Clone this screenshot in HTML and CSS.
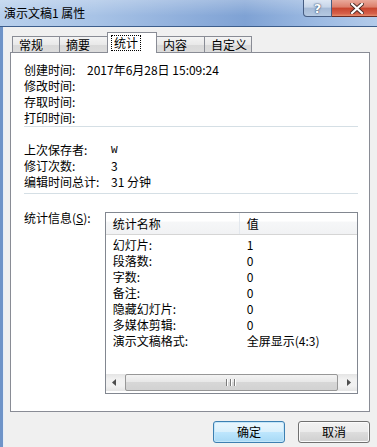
FILE: index.html
```html
<!DOCTYPE html>
<html>
<head>
<meta charset="utf-8">
<link rel="stylesheet" href="styles.css">
</head>
<body>
<div class="win">
  <div class="titlebar">
    <span class="title">演示文稿1 属性</span>
    <div class="caps">
      <div class="cap help">?</div>
      <div class="cap close">
        <svg width="14" height="11" viewBox="0 0 14 11"><path d="M2 1 L12 10 M12 1 L2 10" stroke="#4a2a24" stroke-width="4" stroke-linecap="square"/><path d="M2 1 L12 10 M12 1 L2 10" stroke="#fff" stroke-width="2.2" stroke-linecap="square"/></svg>
      </div>
    </div>
  </div>
  <div class="frame">
    <div class="client">
      <div class="tabs">
        <div class="tab w47">常规</div>
        <div class="tab w48">摘要</div>
        <div class="tab sel"><span class="focus">统计</span></div>
        <div class="tab w47">内容</div>
        <div class="tab w48">自定义</div>
      </div>
      <div class="panel">
        <div class="rows">
          <div class="row"><span class="lbl1">创建时间:</span><span>2017年6月28日 15:09:24</span></div>
          <div class="row"><span class="lbl1">修改时间:</span></div>
          <div class="row"><span class="lbl1">存取时间:</span></div>
          <div class="row"><span class="lbl1">打印时间:</span></div>
        </div>
        <div class="sep s1"></div>
        <div class="rows r2">
          <div class="row"><span class="lbl2">上次保存者:</span><span class="w">W</span></div>
          <div class="row"><span class="lbl2">修订次数:</span><span>3</span></div>
          <div class="row"><span class="lbl2">编辑时间总计:</span><span>31 分钟</span></div>
        </div>
        <div class="sep s2"></div>
        <div class="stats">
          <span class="slbl">统计信息(<u>S</u>):</span>
          <div class="lv">
            <div class="lvhead"><div class="c1">统计名称</div><div class="c2">值</div></div>
            <div class="lvbody">
              <div class="lvrow"><div class="c1">幻灯片:</div><div class="c2">1</div></div>
              <div class="lvrow"><div class="c1">段落数:</div><div class="c2">0</div></div>
              <div class="lvrow"><div class="c1">字数:</div><div class="c2">0</div></div>
              <div class="lvrow"><div class="c1">备注:</div><div class="c2">0</div></div>
              <div class="lvrow"><div class="c1">隐藏幻灯片:</div><div class="c2">0</div></div>
              <div class="lvrow"><div class="c1">多媒体剪辑:</div><div class="c2">0</div></div>
              <div class="lvrow"><div class="c1">演示文稿格式:</div><div class="c2">全屏显示(4:3)</div></div>
            </div>
            <div class="hscroll">
              <div class="arrow"><svg width="4" height="7" viewBox="0 0 4 7"><path d="M4 0 L0 3.5 L4 7Z" fill="#4d4d4d"/></svg></div>
              <div class="thumb"><span class="grip"><i></i><i></i><i></i></span></div>
              <div class="arrow"><svg width="4" height="7" viewBox="0 0 4 7"><path d="M0 0 L4 3.5 L0 7Z" fill="#4d4d4d"/></svg></div>
            </div>
          </div>
        </div>
      </div>
      <div class="buttons">
        <div class="btn def">确定</div>
        <div class="btn">取消</div>
      </div>
    </div>
  </div>
</div>
</body>
</html>
```

FILE: styles.css
```css
html, body {
  margin: 0;
  padding: 0;
}
body {
  width: 377px;
  height: 447px;
  overflow: hidden;
  font-family: "Noto Sans CJK SC", "Noto Sans", sans-serif;
  font-size: 12px;
  color: #000;
  background: #f0f0f0;
}
.win {
  width: 377px;
  height: 447px;
  display: flex;
  flex-direction: column;
}
.titlebar {
  height: 26px;
  flex: none;
  display: flex;
  justify-content: space-between;
  align-items: flex-start;
  border-bottom: 1px solid #3d5e8c;
  background:
    linear-gradient(to bottom, rgba(255,255,255,0.25), rgba(255,255,255,0) 60%),
    linear-gradient(to right, #b7cfec 0%, #a8c3e6 25%, #8eaedb 50%, #7fa2d4 65%, #9dbbe3 85%, #b3cbea 100%);
}
.title {
  padding-left: 4px;
  line-height: 26px;
  font-size: 12px;
  color: #000;
}
.caps {
  display: flex;
  margin-right: -6px;
}
.cap {
  height: 17px;
  box-sizing: border-box;
  display: flex;
  align-items: center;
  justify-content: center;
}
.help {
  width: 29px;
  border: 1px solid #465d82;
  border-top: none;
  border-radius: 0 0 0 4px;
  background: linear-gradient(to bottom, #dde7f3 0%, #c6d5e8 45%, #a5bad6 50%, #b5c9e2 100%);
  color: #fff;
  font-family: "DejaVu Sans", sans-serif;
  font-weight: bold;
  font-size: 13px;
  text-shadow: 0 0 2px #2f4669, 0 0 1px #2f4669;
}
.close {
  width: 51px;
  border: 1px solid #6b2a22;
  border-top: none;
  border-left: none;
  background: linear-gradient(to bottom, #e9a99b 0%, #dc7e6b 45%, #c7442d 50%, #d6604a 85%, #e58f6e 100%);
}
.frame {
  flex: 1;
  display: flex;
  border-left: 3px solid #6f94c8;
}
.client {
  flex: 1;
  border-left: 1px solid #e6eef8;
  padding: 5px 0 0 6px;
  display: flex;
  flex-direction: column;
}
.tabs {
  height: 20px;
  display: flex;
  align-items: flex-end;
  padding-left: 2px;
}
.tab {
  height: 16px;
  box-sizing: border-box;
  border: 1px solid #898c95;
  border-bottom: none;
  border-right: none;
  padding-left: 6px;
  line-height: 15px;
  background: linear-gradient(to bottom, #f4f4f4 0%, #e9e9e9 50%, #d9d9d9 51%, #dcdcdc 100%);
}
.w47 { width: 47px; }
.w48 { width: 48px; }
.tabs .tab:last-child { border-right: 1px solid #898c95; }
.tab.sel {
  width: 50px;
  height: 21px;
  margin-bottom: -1px;
  position: relative;
  z-index: 1;
  background: #fff;
  border-right: 1px solid #898c95;
  padding-left: 4px;
  padding-top: 2px;
  line-height: 15px;
}
.tab.sel + .tab { border-left: none; }
.focus {
  display: inline-block;
  outline: 1px dotted #000;
  outline-offset: 0;
  padding: 0 2px;
  line-height: 14px;
}
.panel {
  width: 360px;
  height: 360px;
  box-sizing: border-box;
  border: 1px solid #898c95;
  background: #fff;
  padding: 9px 11px 0 13px;
  display: flex;
  flex-direction: column;
}
.rows .row {
  height: 16px;
  line-height: 16px;
  display: flex;
  white-space: nowrap;
}
.lbl1 { width: 63px; }
.lbl2 { width: 87px; }
.w { font-family: "Liberation Mono", monospace; font-size: 11px; }
.sep {
  height: 1px;
  background: #d5dfe5;
}
.s1 { margin-top: 0; }
.r2 { margin-top: 15px; }
.s2 { margin-top: 3px; }
.stats {
  margin-top: 16px;
  display: flex;
  align-items: flex-start;
}
.slbl {
  width: 81px;
  line-height: 16px;
}
.slbl u { text-decoration: underline; }
.lv {
  margin-top: 2px;
  width: 254px;
  height: 182px;
  box-sizing: border-box;
  border: 1px solid #828790;
  display: flex;
  flex-direction: column;
  background: #fff;
}
.lvhead {
  height: 22px;
  flex: none;
  display: flex;
  line-height: 22px;
  box-sizing: border-box;
  border-bottom: 1px solid #d5d5d5;
  background: linear-gradient(to bottom, #ffffff 0%, #ffffff 40%, #f6f7f8 41%, #f1f2f4 100%);
}
.lvhead .c1 {
  border-right: 1px solid #e3e8ee;
}
.c1 {
  width: 134px;
  box-sizing: border-box;
  padding-left: 7px;
  flex: none;
}
.c2 {
  padding-left: 7px;
  white-space: nowrap;
}
.lvbody {
  flex: 1;
  padding-top: 2px;
}
.lvrow {
  display: flex;
  height: 16px;
  line-height: 16px;
}
.hscroll {
  height: 17px;
  flex: none;
  margin-bottom: 2px;
  display: flex;
  align-items: stretch;
  background: linear-gradient(to bottom, #e4e4e4, #f1f1f1 30%, #f1f1f1 70%, #e4e4e4);
}
.arrow {
  width: 17px;
  flex: none;
  display: flex;
  align-items: center;
  justify-content: center;
}
.thumb {
  flex: 1;
  margin: 0 2px 0 2px;
  box-sizing: border-box;
  border: 1px solid #979797;
  border-radius: 2px;
  background: linear-gradient(to bottom, #f3f3f3 0%, #e8e8e8 45%, #d7d7d7 50%, #d2d2d2 100%);
  display: flex;
  align-items: center;
  justify-content: center;
}
.grip {
  display: flex;
  gap: 2px;
}
.grip i {
  display: block;
  width: 1px;
  height: 7px;
  background: #7a7a7a;
  border-right: 1px solid #fff;
}
.buttons {
  margin-top: 9px;
  display: flex;
  justify-content: flex-end;
  gap: 13px;
  padding-right: 7px;
}
.btn {
  width: 72px;
  height: 22px;
  box-sizing: border-box;
  border: 1px solid #707070;
  border-radius: 3px;
  text-align: center;
  line-height: 20px;
  background: linear-gradient(to bottom, #f2f2f2 0%, #ebebeb 50%, #dddddd 51%, #cfcfcf 100%);
  box-shadow: inset 0 0 0 1px #fbfbfb;
}
.btn.def {
  border-color: #3c7fb1;
  background: linear-gradient(to bottom, #eaf6fd 0%, #d9f0fc 50%, #bee6fd 51%, #a7d9f5 100%);
  box-shadow: inset 0 0 0 1px #c3e6f9;
}
```
